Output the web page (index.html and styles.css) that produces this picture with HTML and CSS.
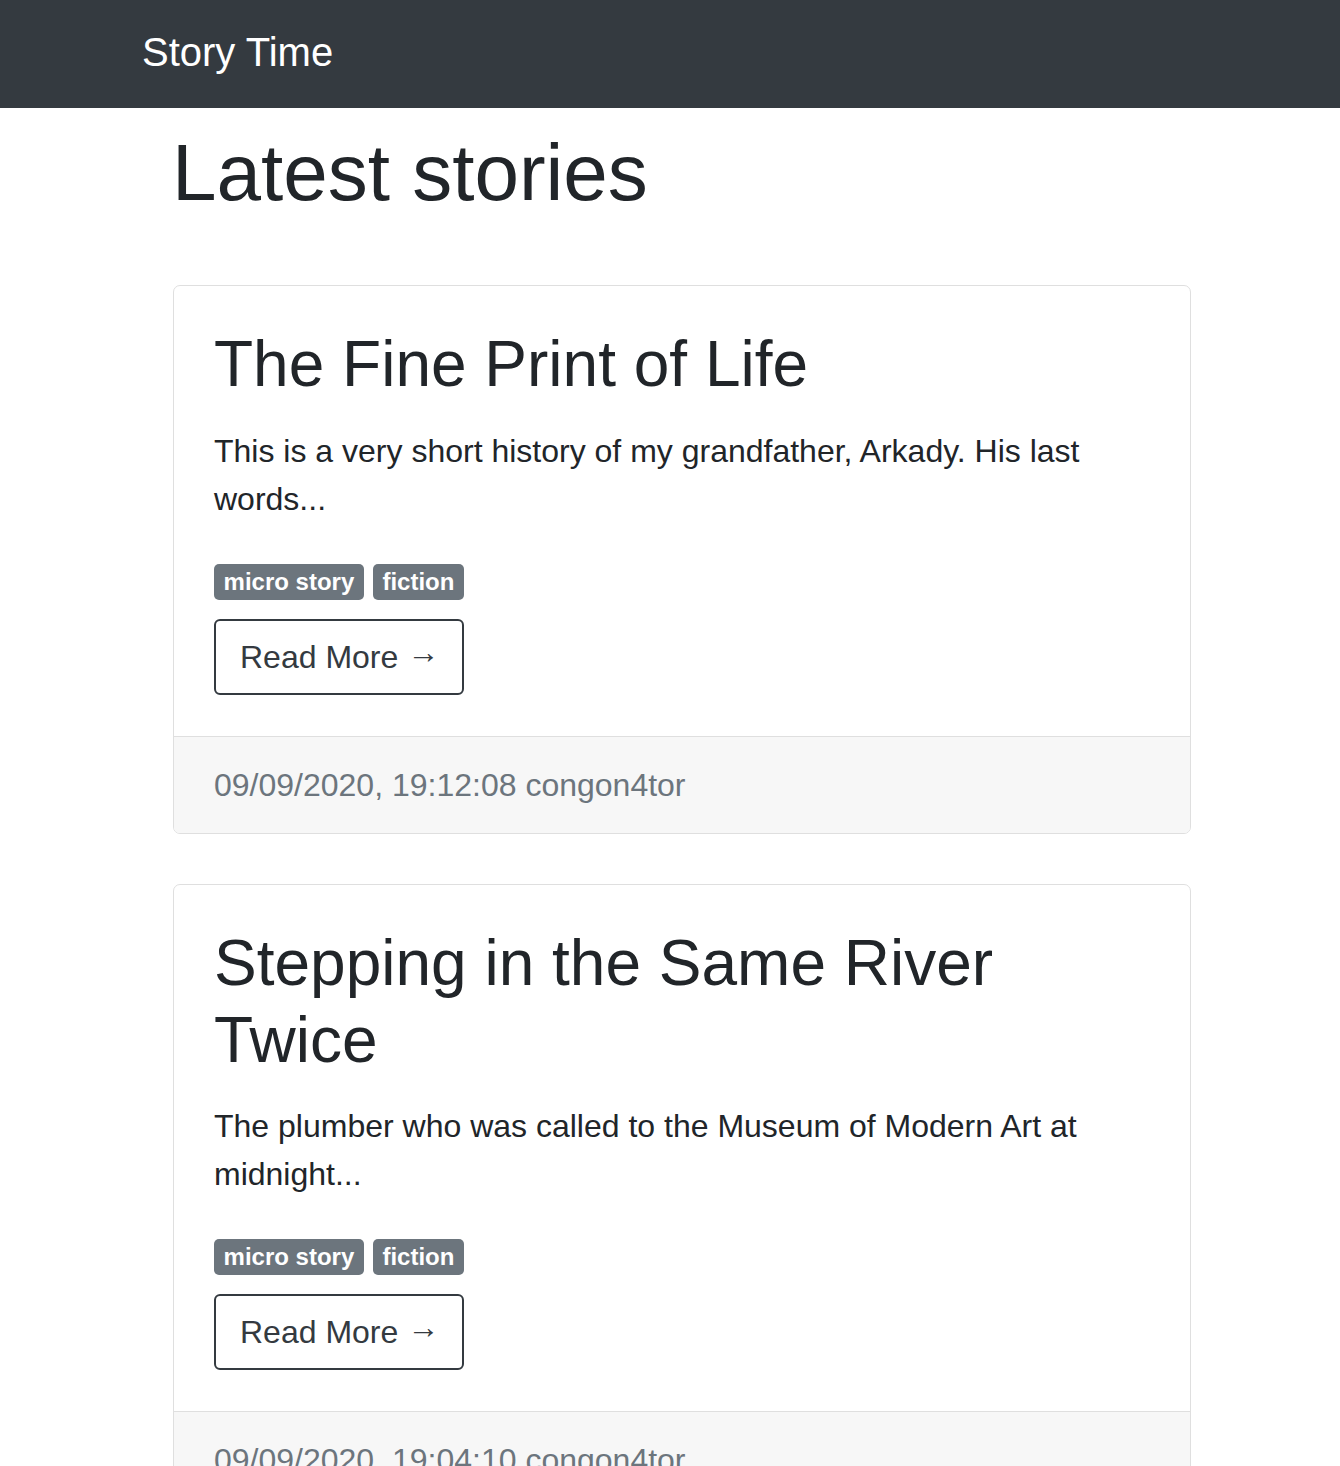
FILE: index.html
```html
<!DOCTYPE html>
<html lang="en">
<head>
<meta charset="utf-8">
<title>Story Time</title>
<link rel="stylesheet" href="styles.css">
</head>
<body>
<nav class="navbar">
  <a class="brand" href="#">Story Time</a>
</nav>
<main class="container">
  <h1 class="page-title">Latest stories</h1>

  <article class="card">
    <div class="card-body">
      <h2 class="card-title">The Fine Print of Life</h2>
      <p class="card-text">This is a very short history of my grandfather, Arkady. His last words...</p>
      <div class="tags"><span class="badge">micro story</span> <span class="badge">fiction</span></div>
      <div><a class="btn" href="#">Read More <span class="arrow">&rarr;</span></a></div>
    </div>
    <div class="card-footer">09/09/2020, 19:12:08 congon4tor</div>
  </article>

  <article class="card">
    <div class="card-body">
      <h2 class="card-title">Stepping in the Same River Twice</h2>
      <p class="card-text">The plumber who was called to the Museum of Modern Art at midnight...</p>
      <div class="tags"><span class="badge">micro story</span> <span class="badge">fiction</span></div>
      <div><a class="btn" href="#">Read More <span class="arrow">&rarr;</span></a></div>
    </div>
    <div class="card-footer">09/09/2020, 19:04:10 congon4tor</div>
  </article>
</main>
</body>
</html>
```

FILE: styles.css
```css
* { box-sizing: border-box; }

html, body {
  margin: 0;
  padding: 0;
  background: #fff;
}

body {
  font-family: "Liberation Sans", Arial, sans-serif;
  font-size: 32px;
  line-height: 1.5;
  color: #212529;
}

.navbar {
  background: #343a40;
  height: 108px;
  padding: 22px 0 0 142px;
}

.brand {
  color: #fff;
  text-decoration: none;
  font-size: 40px;
  line-height: 60px;
}

.container {
  width: 1018px;
  margin-left: 173px;
}

.page-title {
  font-size: 80px;
  font-weight: 400;
  line-height: 1.2;
  margin: 17px 0 64px -1px;
}

.card {
  border: 1px solid #dfdfdf;
  border-radius: 7px;
  margin-bottom: 50px;
  overflow: hidden;
}

.card-body {
  padding: 40px 40px 41px;
}

.card-title {
  font-size: 64px;
  font-weight: 400;
  line-height: 1.2;
  margin: 0 0 24px;
}

.card-text {
  margin: 0 0 32px;
}

.tags {
  margin-bottom: 16px;
}

.badge {
  display: inline-block;
  font-size: 24px;
  font-weight: 700;
  line-height: 1;
  padding: 6px 9.6px;
  border-radius: 5px;
  background: #6c757d;
  color: #fff;
}

.btn {
  display: inline-block;
  border: 2px solid #343a40;
  border-radius: 6px;
  color: #343a40;
  text-decoration: none;
  padding: 12px 23px 12px 24px;
  line-height: 48px;
}

.arrow {
  position: relative;
  top: -5px;
}

.card-footer {
  background: #f7f7f7;
  border-top: 1px solid #dfdfdf;
  padding: 24px 40px;
  color: #6c757d;
}
```
